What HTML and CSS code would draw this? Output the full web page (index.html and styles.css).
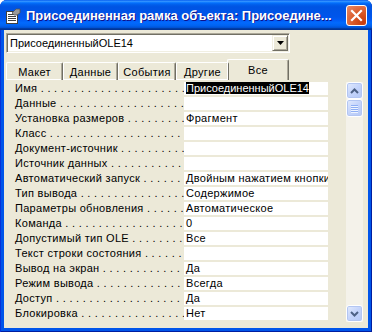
FILE: index.html
```html
<!DOCTYPE html>
<html lang="ru">
<head>
    <meta charset="UTF-8">
    <title>Присоединенная рамка объекта</title>
    <link rel="stylesheet" href="styles.css">
</head>
<body>

    <div class="window">
        <!-- Title bar -->
        <div class="titlebar">
            <svg class="app-icon" width="16" height="16" viewBox="0 0 16 16">
                <rect x="1.5" y="3.5" width="11" height="12" fill="#fff" stroke="#404040"/>
                <rect x="3" y="6" width="8" height="1" fill="#404040"/>
                <rect x="3" y="8" width="8" height="1" fill="#404040"/>
                <rect x="3" y="10" width="8" height="1" fill="#404040"/>
                <rect x="3" y="12" width="8" height="1" fill="#404040"/>
                <path d="M7 5 L11 1 L15 1 L15 5 L12 7 L9 7 Z" fill="#9a9a9a" stroke="#505050" stroke-width="0.8"/>
            </svg>
            <span class="title">Присоединенная рамка объекта: Присоедине...</span>
            <div class="close-btn">
                <svg width="21" height="21" viewBox="0 0 21 21">
                    <path d="M6 6 L15 15 M15 6 L6 15" stroke="#fff" stroke-width="2.2" stroke-linecap="square"/>
                </svg>
            </div>
        </div>

        <div class="client">
            <!-- Object selector -->
            <div class="combo">
                <span class="combo-text">ПрисоединенныйOLE14</span>
                <span class="combo-btn">
                    <svg width="7" height="4" viewBox="0 0 7 4"><path d="M0 0 H7 L3.5 4 Z" fill="#000"/></svg>
                </span>
            </div>

            <!-- Tabs -->
            <div class="tabs">
                <div class="tab tab-layout">Макет</div>
                <div class="tab tab-data">Данные</div>
                <div class="tab tab-events">События</div>
                <div class="tab tab-other">Другие</div>
                <div class="tab tab-all active">Все</div>
            </div>

            <!-- Property list -->
            <div class="sheet">
                <div class="props">
                    <div class="row"><div class="name">Имя</div><div class="value"><span class="sel">ПрисоединенныйOLE14</span></div></div>
                    <div class="row"><div class="name">Данные</div><div class="value"></div></div>
                    <div class="row"><div class="name">Установка размеров</div><div class="value">Фрагмент</div></div>
                    <div class="row"><div class="name">Класс</div><div class="value"></div></div>
                    <div class="row"><div class="name">Документ-источник</div><div class="value"></div></div>
                    <div class="row"><div class="name">Источник данных</div><div class="value"></div></div>
                    <div class="row"><div class="name">Автоматический запуск</div><div class="value">Двойным нажатием кнопки мыши</div></div>
                    <div class="row"><div class="name">Тип вывода</div><div class="value">Содержимое</div></div>
                    <div class="row"><div class="name">Параметры обновления</div><div class="value">Автоматическое</div></div>
                    <div class="row"><div class="name">Команда</div><div class="value">0</div></div>
                    <div class="row"><div class="name">Допустимый тип OLE</div><div class="value">Все</div></div>
                    <div class="row"><div class="name">Текст строки состояния</div><div class="value"></div></div>
                    <div class="row"><div class="name">Вывод на экран</div><div class="value">Да</div></div>
                    <div class="row"><div class="name">Режим вывода</div><div class="value">Всегда</div></div>
                    <div class="row"><div class="name">Доступ</div><div class="value">Да</div></div>
                    <div class="row"><div class="name">Блокировка</div><div class="value">Нет</div></div>
                </div>

                <div class="scrollbar">
                    <div class="sb-btn">
                        <svg width="9" height="6" viewBox="0 0 9 6"><path d="M1 5 L4.5 1.5 L8 5" fill="none" stroke="#4d6185" stroke-width="2"/></svg>
                    </div>
                    <div class="sb-thumb">
                        <span></span><span></span><span></span><span></span>
                    </div>
                    <div class="sb-track"></div>
                    <div class="sb-btn">
                        <svg width="9" height="6" viewBox="0 0 9 6"><path d="M1 1 L4.5 4.5 L8 1" fill="none" stroke="#4d6185" stroke-width="2"/></svg>
                    </div>
                </div>
            </div>
        </div>
    </div>

</body>
</html>
```

FILE: styles.css
```css
body {
    margin: 0;
    padding: 0;
    font-family: "Liberation Sans", Arial, sans-serif;
    font-size: 11px;
    letter-spacing: 0.3px;
    color: #000;
    background-color: #fff;
}
.window {
    width: 372px;
    height: 332px;
    box-sizing: border-box;
    display: flex;
    flex-direction: column;
    background-color: #0055ea;
    border-radius: 7px 7px 0 0;
    box-shadow: inset 1px 0 0 #0831d9, inset -1px 0 0 #001ea0, inset 0 -1px 0 #001ea0;
    overflow: hidden;
}
/* Title bar */
.titlebar {
    height: 30px;
    flex-shrink: 0;
    display: flex;
    align-items: center;
    padding: 0 5px 0 5px;
    background: linear-gradient(to bottom, #0058ee 0%, #3593ff 4%, #288eff 6%, #127dff 8%, #036ffc 10%, #0262ee 14%, #0057e5 20%, #0054e3 24%, #0055eb 56%, #005bf5 66%, #026afe 76%, #0062ef 86%, #0052d6 92%, #0040ab 94%, #003092 100%);
}
.app-icon {
    flex-shrink: 0;
    margin-top: 1px;
}
.title {
    flex: 1;
    margin-left: 5px;
    color: #fff;
    font-weight: bold;
    font-size: 13px;
    letter-spacing: 0;
    white-space: nowrap;
    overflow: hidden;
    text-shadow: 1px 1px #0f1089;
}
.close-btn {
    width: 21px;
    height: 21px;
    box-sizing: border-box;
    margin-left: 6px;
    border: 1px solid #fff;
    border-radius: 3px;
    background: radial-gradient(circle at 85% 85%, #c83c0c 0%, #da5a28 45%, #e88a68 100%);
    display: flex;
    align-items: center;
    justify-content: center;
}
.close-btn svg {
    margin: -1px;
}
/* Client area */
.client {
    flex: 1;
    margin: 0 4px 4px 4px;
    background-color: #ece9d8;
    display: flex;
    flex-direction: column;
}
.combo {
    margin: 3px 0 0 2px;
    width: 284px;
    height: 20px;
    box-sizing: border-box;
    display: flex;
    align-items: center;
    background-color: #fff;
    border-top: 1px solid #aca899;
    border-left: 1px solid #aca899;
    border-right: 1px solid #fff;
    border-bottom: 1px solid #fff;
    box-shadow: inset 1px 1px 0 #716f64, inset -1px -1px 0 #f1efe2;
}
.combo-text {
    flex: 1;
    padding-left: 3px;
    letter-spacing: 0;
    white-space: nowrap;
}
.combo-btn {
    width: 16px;
    height: 16px;
    margin-right: 1px;
    box-sizing: border-box;
    display: flex;
    align-items: center;
    justify-content: center;
    background-color: #ece9d8;
    border-top: 1px solid #f1efe2;
    border-left: 1px solid #f1efe2;
    border-right: 1px solid #716f64;
    border-bottom: 1px solid #716f64;
    box-shadow: inset 1px 1px 0 #fff, inset -1px -1px 0 #aca899;
}
/* Tabs */
.tabs {
    display: flex;
    align-items: flex-end;
    height: 22px;
    margin-top: 5px;
    padding-left: 2px;
}
.tab {
    height: 18px;
    box-sizing: border-box;
    display: flex;
    align-items: center;
    justify-content: center;
    border-top: 1px solid #fff;
    border-left: 1px solid #fff;
    border-right: 1px solid #716f64;
    box-shadow: inset -1px 0 0 #aca899, inset 0 -1px 0 #fff;
    border-radius: 2px 2px 0 0;
    padding-top: 1px;
}
.tab-layout { width: 57px; }
.tab-data { width: 55px; }
.tab-events { width: 58px; }
.tab-other { width: 53px; }
.tab.active {
    height: 21px;
    margin-left: -2px;
    width: 62px;
    box-shadow: inset -1px 0 0 #aca899;
    padding-bottom: 2px;
}
/* Property sheet */
.sheet {
    display: flex;
    padding: 2px 0 0 4px;
}
.props {
    display: flex;
    flex-direction: column;
    width: 320px;
}
.row {
    display: flex;
    height: 13px;
    margin-bottom: 2px;
    line-height: 13px;
}
.name {
    width: 169px;
    padding-left: 7px;
    white-space: nowrap;
    overflow: hidden;
}
.name::after {
    content: " . . . . . . . . . . . . . . . . . . . . . . . . . . . . . . . . .";
}
.value {
    width: 142px;
    padding-left: 2px;
    background-color: #fff;
    white-space: nowrap;
    overflow: hidden;
}
.sel {
    background-color: #000;
    color: #fff;
    letter-spacing: 0;
}
/* Scrollbar */
.scrollbar {
    width: 17px;
    height: 240px;
    margin-left: 18px;
    display: flex;
    flex-direction: column;
    background-color: #f4f2ea;
}
.sb-btn, .sb-thumb {
    height: 17px;
    box-sizing: border-box;
    border: 1px solid #fff;
    border-radius: 3px;
    background: linear-gradient(135deg, #e3ebfd 0%, #c4d4fb 50%, #b4c8f6 100%);
    box-shadow: inset 0 0 0 1px #b3c6f2;
    display: flex;
    align-items: center;
    justify-content: center;
}
.sb-thumb {
    height: 18px;
    flex-direction: column;
    gap: 1px;
}
.sb-thumb span {
    width: 7px;
    height: 1px;
    background-color: #8eaef4;
    box-shadow: 0 1px 0 #eef4fe;
}
.sb-track {
    flex: 1;
}
```
